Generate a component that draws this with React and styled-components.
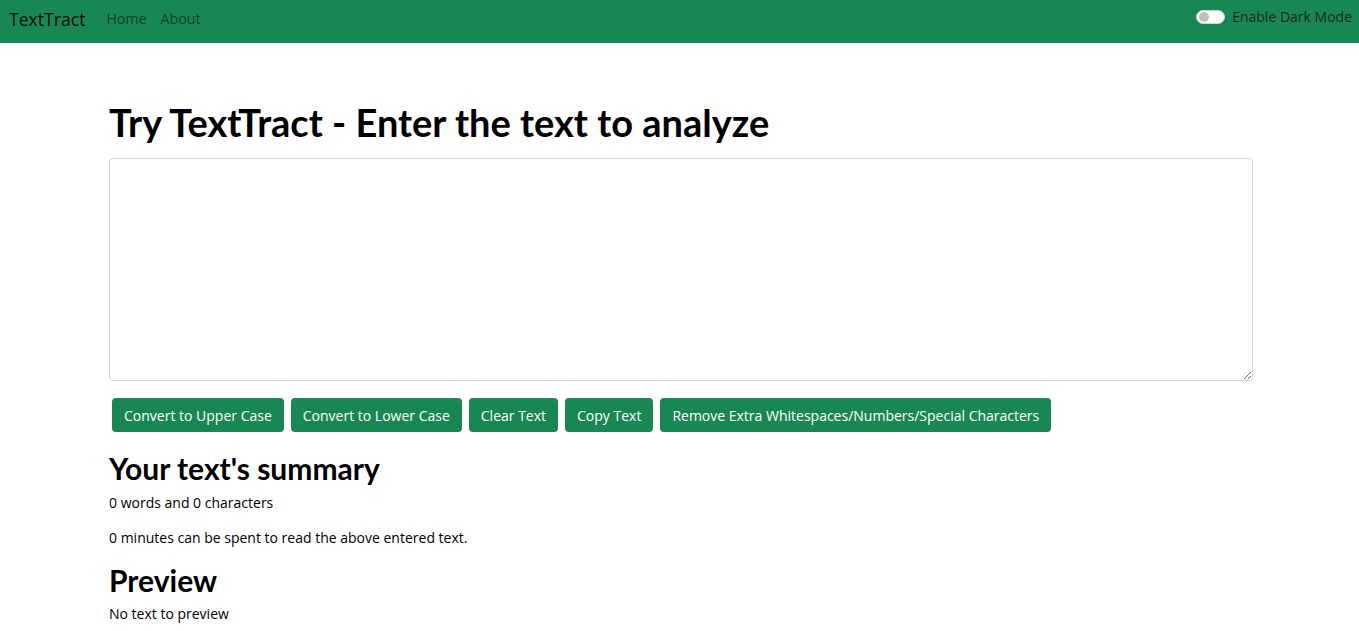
import React, { useState } from "react";
import styled, { createGlobalStyle } from "styled-components";

const GlobalStyle = createGlobalStyle`
  * { box-sizing: border-box; }
  body {
    margin: 0;
    font-family: "Open Sans", "Noto Sans", sans-serif;
    color: #212529;
    background: #fff;
  }
`;

const Nav = styled.nav`
  height: 43px;
  background-color: #198754;
  display: flex;
  align-items: center;
  padding: 0 7px 0 9px;
`;

const Brand = styled.a`
  font-size: 17.6px;
  color: rgba(0, 0, 0, 0.9);
  margin-right: 21px;
  margin-top: -6px;
`;

const NavLink = styled.a`
  font-size: 14.2px;
  color: rgba(0, 0, 0, 0.55);
  margin-right: 14px;
  margin-top: -6px;
`;

const Spacer = styled.div`
  flex: 1;
`;

const SwitchWrap = styled.label`
  display: flex;
  align-items: center;
  gap: 7px;
  font-size: 14px;
  color: #212529;
  margin-top: -10px;
`;

const Track = styled.span`
  width: 29px;
  height: 14px;
  border-radius: 7px;
  background: #fff;
  border: 1px solid #ced4da;
  display: flex;
  align-items: center;
  padding-left: 2px;
  &::before {
    content: "";
    width: 10px;
    height: 10px;
    border-radius: 50%;
    background: #bfbfbf;
  }
`;

const Main = styled.main`
  width: 1144px;
  margin: 0 0 0 109px;
  padding-top: 58px;
`;

const Title = styled.h1`
  font-family: Lato, "Open Sans", sans-serif;
  font-size: 38px;
  font-weight: 700;
  color: #000;
  margin: 0 0 14px;
  line-height: 43px;
`;

const TextArea = styled.textarea`
  display: block;
  width: 100%;
  height: 223px;
  border: 1px solid #ced4da;
  border-radius: 4px;
  padding: 6px 12px;
  font-family: inherit;
  font-size: 15px;
  resize: vertical;
  outline: none;
`;

const ButtonRow = styled.div`
  display: flex;
  gap: 7px;
  margin: 17px 0 0 3px;
`;

const Button = styled.button`
  height: 34px;
  padding: 0 12px;
  border: none;
  border-radius: 4px;
  background-color: #198754;
  color: #fff;
  font-family: inherit;
  font-size: 14px;
  cursor: pointer;
`;

const Heading = styled.h2`
  font-family: Lato, "Open Sans", sans-serif;
  font-size: 30px;
  font-weight: 700;
  color: #000;
  margin: ${(p) => p.$top}px 0 ${(p) => p.$bottom}px;
  line-height: 36px;
`;

const Para = styled.p`
  font-size: 14px;
  color: #000;
  margin: 0 0 14px;
  line-height: 21px;
`;

const buttons = [
  "Convert to Upper Case",
  "Convert to Lower Case",
  "Clear Text",
  "Copy Text",
  "Remove Extra Whitespaces/Numbers/Special Characters",
];

export default function App() {
  const [text, setText] = useState("");
  const words = text.split(/\s+/).filter((w) => w.length).length;

  return (
    <>
      <GlobalStyle />
      <Nav>
        <Brand>TextTract</Brand>
        <NavLink>Home</NavLink>
        <NavLink>About</NavLink>
        <Spacer />
        <SwitchWrap>
          <Track />
          Enable Dark Mode
        </SwitchWrap>
      </Nav>
      <Main>
        <Title>Try TextTract - Enter the text to analyze</Title>
        <TextArea value={text} onChange={(e) => setText(e.target.value)} />
        <ButtonRow>
          {buttons.map((b) => (
            <Button key={b}>{b}</Button>
          ))}
        </ButtonRow>
        <Heading $top={18} $bottom={6}>Your text's summary</Heading>
        <Para>
          {words} words and {text.length} characters
        </Para>
        <Para>
          {0.008 * words} minutes can be spent to read the above entered text.
        </Para>
        <Heading $top={14} $bottom={5}>Preview</Heading>
        <Para>{text.length ? text : "No text to preview"}</Para>
      </Main>
    </>
  );
}
